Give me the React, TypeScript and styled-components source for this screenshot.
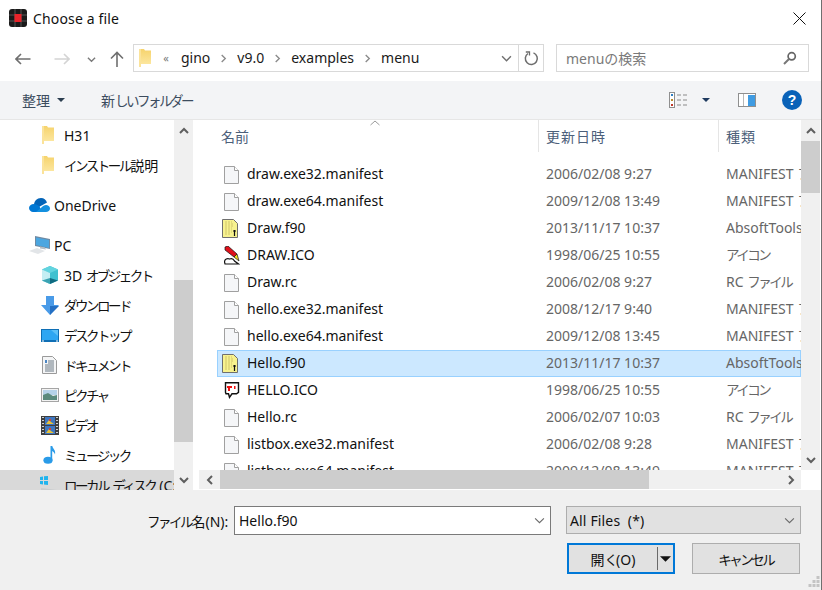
import React from 'react';
import styled, { createGlobalStyle } from 'styled-components';

const UI_FONT = '"Noto Sans", "Noto Sans CJK JP", sans-serif';

const GlobalStyle = createGlobalStyle`
    html, body {
        margin: 0;
        padding: 0;
        background: #ffffff;
    }
    * {
        box-sizing: border-box;
    }
`;

const Dialog = styled.div`
    width: 822px;
    height: 590px;
    display: flex;
    flex-direction: column;
    overflow: hidden;
    background: #ffffff;
    border-right: 1px solid #6f6f6f;
    font-family: ${UI_FONT};
    font-size: 14px;
    color: #1a1a1a;
`;

// the reference font sets kana much narrower than kanji
const Kana = styled.span`
    font-size: 13.5px;
    letter-spacing: -2.5px;
    margin-right: 0.5px;
`;

const TitleBar = styled.div`
    height: 36px;
    flex: none;
    display: flex;
    align-items: center;
    padding: 0 15px 0 9px;
    gap: 6px;
`;

const Title = styled.div`
    flex: 1;
    font-size: 14px;
    letter-spacing: 0.15px;
    color: #111111;
`;

const NavRow = styled.div`
    height: 45px;
    flex: none;
    display: flex;
    align-items: flex-start;
    padding: 8px 12px 0 0;
`;

const NavButton = styled.div<{ $w: number }>`
    width: ${(p) => p.$w}px;
    height: 28px;
    padding-top: 2px;
    flex: none;
    display: flex;
    align-items: center;
    justify-content: center;
`;

const AddressBox = styled.div`
    width: 411px;
    height: 28px;
    margin-left: 4px;
    flex: none;
    display: flex;
    align-items: center;
    border: 1px solid #d9d9d9;
    padding-left: 5px;
`;

const Crumbs = styled.div`
    flex: 1;
    display: flex;
    align-items: center;
    font-size: 14px;
    padding-bottom: 2px;
    color: #1a1a1a;
`;

const CrumbSep = styled.span`
    display: flex;
    width: 27px;
    justify-content: center;
    padding-top: 2px;
`;

const CrumbMore = styled.span`
    display: flex;
    width: 30px;
    justify-content: center;
    color: #7a7a7a;
    font-size: 11px;
`;

const AddressChevron = styled.div`
    display: flex;
    margin-right: 6px;
`;

const AddressTail = styled.div`
    width: 25px;
    height: 26px;
    flex: none;
    display: flex;
    align-items: center;
    justify-content: center;
    border-left: 1px solid #d9d9d9;
`;

const SearchBox = styled.div`
    width: 253px;
    height: 28px;
    margin-left: 12px;
    flex: none;
    display: flex;
    align-items: center;
    justify-content: space-between;
    padding: 0 11px 0 9px;
    border: 1px solid #d9d9d9;
    color: #7a7a7a;
    font-size: 14px;
`;

const Toolbar = styled.div`
    height: 39px;
    flex: none;
    display: flex;
    align-items: center;
    background: #f3f4f6;
    border-bottom: 1px solid #e6e6e6;
    padding: 0 19px 0 22px;
    font-size: 14px;
    color: #3c4c5e;
`;

const ToolItem = styled.div<{ $ml?: number }>`
    display: flex;
    align-items: center;
    gap: 7px;
    margin-left: ${(p) => p.$ml ?? 0}px;
`;

const Spacer = styled.div`
    flex: 1;
`;

const Main = styled.div`
    height: 370px;
    flex: none;
    display: flex;
`;

const Sidebar = styled.div`
    width: 174px;
    flex: none;
    overflow: hidden;
    white-space: nowrap;
`;

const NavGroup = styled.div`
    margin-top: 10px;
`;

const NavEntry = styled.div<{ $indent: number; $gap: number; $selected?: boolean }>`
    height: 30px;
    display: flex;
    align-items: center;
    padding-left: ${(p) => p.$indent}px;
    gap: ${(p) => p.$gap}px;
    background: ${(p) => (p.$selected ? '#d9d9d9' : 'transparent')};
    font-size: 14px;
    color: #111111;
`;

const ScrollY = styled.div<{ $h: number }>`
    width: 19px;
    height: ${(p) => p.$h}px;
    flex: none;
    display: flex;
    flex-direction: column;
    background: #f0f0f0;
`;

const ScrollEnd = styled.div`
    height: 21px;
    flex: none;
    display: flex;
    align-items: center;
    justify-content: center;
`;

const ThumbOffset = styled.div<{ $h: number }>`
    height: ${(p) => p.$h}px;
    flex: none;
`;

const ScrollThumb = styled.div<{ $h: number }>`
    height: ${(p) => p.$h}px;
    flex: none;
    background: #cdcdcd;
`;

const Gutter = styled.div`
    width: 6px;
    flex: none;
`;

const ListPane = styled.div`
    width: 621px;
    flex: none;
    display: flex;
    flex-direction: column;
`;

const ListTop = styled.div`
    height: 350px;
    flex: none;
    display: flex;
`;

const ListBody = styled.div`
    width: 602px;
    flex: none;
    overflow: hidden;
`;

const HeaderRow = styled.div`
    position: relative;
    height: 32px;
    display: grid;
    grid-template-columns: 339px 180px 83px;
    margin-bottom: 9px;
    color: #4c607a;
    font-size: 14px;
`;

const HeaderCell = styled.div<{ $first?: boolean }>`
    display: flex;
    align-items: center;
    padding-left: ${(p) => (p.$first ? 22 : 7)}px;
    letter-spacing: ${(p) => (p.$first ? 0 : 1)}px;
    border-left: ${(p) => (p.$first ? 'none' : '1px solid #e5e5e5')};
`;

const SortArrow = styled.div`
    position: absolute;
    left: 171px;
    top: 0;
    line-height: 0;
`;

const FileRow = styled.div<{ $selected?: boolean }>`
    height: 27px;
    margin-left: 18px;
    display: grid;
    grid-template-columns: 321px 180px 83px;
    align-items: center;
    white-space: nowrap;
    overflow: hidden;
    line-height: 19px;
    background: ${(p) => (p.$selected ? '#cce8ff' : 'transparent')};
    box-shadow: ${(p) => (p.$selected ? 'inset 0 0 0 1px #99d1ff' : 'none')};
`;

const NameCell = styled.div`
    display: flex;
    align-items: center;
    padding-left: 5px;
    gap: 6px;
    color: #111111;
`;

const FileName = styled.span`
    margin-bottom: 2px;
`;

const IconSlot = styled.div`
    width: 19px;
    height: 19px;
    flex: none;
    display: flex;
    align-items: center;
    justify-content: center;
`;

const MutedCell = styled.div`
    height: 19px;
    margin-bottom: 2px;
    padding-left: 8px;
    color: #666666;
    overflow: hidden;
`;

const ScrollX = styled.div`
    height: 20px;
    flex: none;
    display: flex;
`;

const XTrack = styled.div`
    width: 602px;
    flex: none;
    display: flex;
    background: #f0f0f0;
    height: 19px;
`;

const XEnd = styled.div`
    width: 21px;
    flex: none;
    display: flex;
    align-items: center;
    justify-content: center;
`;

const XThumb = styled.div`
    width: 429px;
    flex: none;
    background: #cdcdcd;
`;

const Footer = styled.div`
    position: relative;
    flex: 1;
    background: #f0f0f0;
    display: flex;
    flex-direction: column;
    padding: 16px 0 0 147px;
`;

const FieldRow = styled.div`
    display: flex;
    align-items: flex-start;
`;

const FieldLabel = styled.div`
    width: 87px;
    height: 29px;
    flex: none;
    display: flex;
    align-items: center;
    font-size: 14px;
    color: #111111;
    white-space: pre;
`;

const FileInput = styled.div`
    width: 317px;
    height: 29px;
    flex: none;
    display: flex;
    align-items: center;
    justify-content: space-between;
    padding: 0 5px 0 4px;
    background: #ffffff;
    border: 1px solid #7a7a7a;
    color: #111111;
`;

const FilterSelect = styled.div`
    width: 235px;
    height: 28px;
    margin-left: 15px;
    flex: none;
    display: flex;
    align-items: center;
    justify-content: space-between;
    padding: 0 5px 0 3px;
    background: #e1e1e1;
    border: 1px solid #adadad;
    color: #111111;
    letter-spacing: 0.15px;
`;

const ButtonRow = styled.div`
    display: flex;
    margin: 8px 0 0 420px;
`;

const PrimaryButton = styled.div`
    width: 108px;
    height: 31px;
    flex: none;
    display: flex;
    align-items: center;
    background: #e1e1e1;
    border: 2px solid #0078d7;
    font-size: 14px;
    color: #111111;
`;

const PrimaryLabel = styled.div`
    flex: 1;
    text-align: center;
    white-space: pre;
`;

const SplitArrow = styled.div`
    width: 16px;
    height: 23px;
    flex: none;
    display: flex;
    align-items: center;
    justify-content: center;
    border-left: 1.5px solid #6a6a6a;
`;

const CancelButton = styled.div`
    width: 108px;
    height: 31px;
    margin-left: 17px;
    flex: none;
    display: flex;
    align-items: center;
    justify-content: center;
    background: #e1e1e1;
    border: 1px solid #adadad;
    font-size: 14px;
    color: #111111;
`;

const Grip = styled.div`
    position: absolute;
    right: 1px;
    bottom: 2px;
    line-height: 0;
`;

const HelpBadge = styled.div`
    width: 20px;
    height: 20px;
    display: flex;
    align-items: center;
    justify-content: center;
    border-radius: 50%;
    background: #0a62b8;
    color: #ffffff;
    font-family: 'Liberation Sans', sans-serif;
    font-size: 14px;
    font-weight: 700;
`;

// wraps the kana runs of a label so they get the narrow setting
const jp = (text: string) =>
    text.split(/([\u3040-\u30ff]+)/).map((part, i) =>
        i % 2 === 1 ? <Kana key={i}>{part}</Kana> : part,
    );

const Chevron = ({ dir, size = 10, color = '#5f5f5f', w = 2 }: { dir: 'up' | 'down' | 'left' | 'right'; size?: number; color?: string; w?: number }) => {
    const paths = { up: 'M1 7l4-4 4 4', down: 'M1 3l4 4 4-4', left: 'M7 1L3 5l4 4', right: 'M3 1l4 4-4 4' };
    return (
        <svg width={size} height={size} viewBox="0 0 10 10" fill="none">
            <path d={paths[dir]} stroke={color} strokeWidth={w} />
        </svg>
    );
};

const BackArrow = () => (
    <svg width="16" height="12" viewBox="0 0 16 12" fill="none">
        <path d="M15.500 6H1M6 1L1 6l5 5" stroke="#6f6f6f" strokeWidth="1.600" />
    </svg>
);

const ForwardArrow = () => (
    <svg width="16" height="12" viewBox="0 0 16 12" fill="none">
        <path d="M.5 6H15M10 1l5 5-5 5" stroke="#d4d4d4" strokeWidth="1.600" />
    </svg>
);

const UpArrow = () => (
    <svg width="14" height="16" viewBox="0 0 14 16" fill="none">
        <path d="M7 16V1.500M1 7.500l6-6 6 6" stroke="#6f6f6f" strokeWidth="1.600" />
    </svg>
);

const AppLogo = () => (
    <svg width="18" height="18" viewBox="0 0 18 18">
        <rect width="18" height="18" rx="3" fill="#1a1a1a" />
        <path d="M0 6h18M0 12h18M6 0v18M12 0v18" stroke="#555555" strokeWidth="1" />
        <rect x="5.500" y="5" width="7" height="8" fill="#e8232a" />
    </svg>
);

const Folder = () => (
    <svg width="12" height="18" viewBox="0 0 12 18">
        <defs>
            <linearGradient id="folderFill" x1="0" y1="0" x2="0" y2="1">
                <stop offset="0" stopColor="#f6d36c" />
                <stop offset="1" stopColor="#fdeaa8" />
            </linearGradient>
        </defs>
        <path d="M0 0h5l1 1.500h6V15H2l-2 3z" fill="url(#folderFill)" />
        <path d="M0 0h2v18H0z" fill="#fbe39a" />
    </svg>
);

const OneDriveIcon = () => (
    <svg width="21" height="14" viewBox="0 0 21 14">
        <path d="M5 7C5 3 8 0 12 0c3 0 5 2 6 4.500L10 9z" fill="#0364b8" />
        <path d="M4 14C2 14 0 12 0 10s2-4 5-4c2 0 4 1 5.500 2.500L13 14z" fill="#0078d4" />
        <path d="M7 14l6-5c1-1 2-2 4-2s4 1.500 4 3.500S19 14 17 14z" fill="#1490df" />
    </svg>
);

const PcIcon = () => (
    <svg width="21" height="18" viewBox="0 0 21 18">
        <path d="M6 0l15 3v10L6 10z" fill="#6f8aa3" />
        <path d="M7 1.500l13 2.500v8L7 9z" fill="#4ba6e0" />
        <path d="M11 10.500l5 1 1 2-6-1z" fill="#b4bec6" />
        <path d="M0 15l8-3 8 3-7 3z" fill="#e2e5e8" />
    </svg>
);

const CubeIcon = () => (
    <svg width="18" height="18" viewBox="0 0 18 18">
        <path d="M9 0l8 3.500v11L9 18l-8-3.500v-11z" fill="#3fc1d0" />
        <path d="M9 0l8 3.500L9 7 1 3.500z" fill="#62d4df" />
        <path d="M1 3.500L9 7v11l-8-3.500z" fill="#c4eef3" />
        <path d="M9 12l8 2.500L9 18z" fill="#0f6a80" />
        <path d="M9 12l-8 2.500L9 18z" fill="#3aa3b3" />
    </svg>
);

const DownloadIcon = () => (
    <svg width="18" height="19" viewBox="0 0 18 19">
        <path d="M5 0h8v9h5l-9 10L0 9h5z" fill="#4a9be8" />
        <path d="M9 10h9l-9 9z" fill="#2470c4" />
    </svg>
);

const DesktopIcon = () => (
    <svg width="18" height="13" viewBox="0 0 18 13">
        <rect width="18" height="13" fill="#0f6fb5" />
        <rect x="1" y="1" width="16" height="10" fill="#2ea6f2" />
        <path d="M10 1h7v6z" fill="#5cc0f7" />
        <path d="M1 12h2M15 12h2" stroke="#ffffff" strokeWidth="1" />
    </svg>
);

const DocumentIcon = () => (
    <svg width="15" height="18" viewBox="0 0 15 18">
        <path d="M.5.500h10l4 4v13H.5z" fill="#f4f5f6" stroke="#9a9a9a" />
        <path d="M3 4h2v3H3z" fill="#4b86c4" />
        <path d="M6 5h6M6 7h6M3 9h9M3 11h9M3 13h9M3 15h9" stroke="#6c7a86" strokeWidth="1" />
    </svg>
);

const PictureIcon = () => (
    <svg width="18" height="14" viewBox="0 0 18 14">
        <rect x=".5" y=".5" width="17" height="13" fill="#f3f3f3" stroke="#a5a5a5" />
        <rect x="2" y="2" width="14" height="5" fill="#b5d2e8" />
        <path d="M2 7l5-2 5 3 4-1v5H2z" fill="#5b8a7c" />
    </svg>
);

const VideoIcon = () => (
    <svg width="18" height="19" viewBox="0 0 18 19">
        <rect width="18" height="19" fill="#3f3f3f" />
        <path d="M1 1.500h2M1 4.500h2M1 7.500h2M1 10.500h2M1 13.500h2M1 16.500h2M15 1.500h2M15 4.500h2M15 7.500h2M15 10.500h2M15 13.500h2M15 16.500h2" stroke="#d0d0d0" strokeWidth="1" />
        <rect x="4" y="1" width="10" height="8" fill="#3f76c0" />
        <rect x="4" y="10" width="10" height="8" fill="#3f76c0" />
        <path d="M5 8l3-4 2 2 3 2zM5 17l3-4 2 2 3 2z" fill="#e8c23a" />
        <path d="M8 3h2v2H8zM8 12h2v2H8z" fill="#d8452f" />
    </svg>
);

const MusicIcon = () => (
    <svg width="13" height="18" viewBox="0 0 13 18">
        <ellipse cx="5" cy="14.300" rx="4.600" ry="3.500" fill="#2a9be8" />
        <path d="M7.500 14V0h1.800c.5 3 3.700 4 2.700 8.500-.5-2-2-3-2.800-3.500v9z" fill="#2a9be8" />
    </svg>
);

const DiskIcon = () => (
    <svg width="19" height="19" viewBox="0 0 19 19">
        <path d="M1 1l3-.5V4H1zM5 .3L9 0v4H5zM1 5h3v3.500L1 8zM5 5h4v4l-4-.5z" fill="#1fb4ee" />
        <path d="M2 12l16 2v5H2z" fill="#c9ccce" />
    </svg>
);

const BlankFile = () => (
    <svg width="15" height="18" viewBox="0 0 15 18">
        <path d="M.5.500h10l4 4v13H.5z" fill="#f5f6f8" stroke="#a0a0a0" />
        <path d="M10.500.500v4h4" fill="#ffffff" stroke="#a0a0a0" />
    </svg>
);

const FortranFile = () => (
    <svg width="19" height="19" viewBox="0 0 19 19">
        <path d="M.5.500h11l4 4v14H.5z" fill="#f7f28e" stroke="#6f6f6f" />
        <path d="M3 3h7M3 5h8M3 7h9M3 9h7M3 11h7M3 13h7M3 15h6" stroke="#cfc36a" strokeWidth="1.200" strokeDasharray="2 1" />
        <path d="M12.500 11v6M11 12h3" stroke="#111111" strokeWidth="1.200" />
    </svg>
);

const DrawIco = () => (
    <svg width="16" height="19" viewBox="0 0 16 19">
        <path d="M1 1l3-1 9 8-3 3-9-7z" fill="#e0101a" stroke="#111111" strokeWidth=".7" />
        <path d="M10 11l3-3 2 7z" fill="#f4e020" stroke="#111111" strokeWidth=".7" />
        <path d="M.5 16c0-3 3-4 5-3 2-1 4 0 5 2l4 3H1z" fill="#ffffff" stroke="#111111" strokeWidth="1.200" />
    </svg>
);

const HelloIco = () => (
    <svg width="16" height="17" viewBox="0 0 16 17">
        <path d="M1.500.800h13v9.500l-2 1.500H8l-2.500 3.500-1-3.500H2l-.500-1.500z" fill="#ffffff" stroke="#111111" strokeWidth="1.400" />
        <path d="M3 4h5v2H6v3H4V6H3zM10 4h1.500v3H10z" fill="#ee1111" />
    </svg>
);

const RefreshIcon = () => (
    <svg width="15" height="15" viewBox="0 0 15 15" fill="none">
        <path d="M4 2.500a6 6 0 1 0 5.500-.6" stroke="#6d6d6d" strokeWidth="1.500" />
        <path d="M1.800 1H5.500v3.600" stroke="#6d6d6d" strokeWidth="1.300" />
    </svg>
);

const SearchIcon = () => (
    <svg width="14" height="14" viewBox="0 0 14 14" fill="none">
        <circle cx="8.700" cy="5.300" r="3.600" stroke="#666666" strokeWidth="1.700" />
        <path d="M6 8L1 13" stroke="#777777" strokeWidth="2" />
    </svg>
);

const CloseIcon = () => (
    <svg width="13" height="13" viewBox="0 0 13 13" fill="none">
        <path d="M.5.500l12 12M12.500.500l-12 12" stroke="#111111" strokeWidth="1" />
    </svg>
);

const ViewIcon = () => (
    <svg width="19" height="16" viewBox="0 0 19 16" fill="none">
        <rect x=".5" y=".5" width="5" height="15" fill="#ffffff" stroke="#8f8f8f" />
        <path d="M2 2h2v2H2z" fill="#2f7fc2" />
        <path d="M2 7h2v2H2z" fill="#b98b2c" />
        <path d="M2 12h2v2H2z" fill="#c0382b" />
        <path d="M8 3h4M14 3h4M8 8h4M14 8h4M8 13h4M14 13h4" stroke="#8a8a8a" strokeWidth="1" />
    </svg>
);

const PaneIcon = () => (
    <svg width="18" height="14" viewBox="0 0 18 14">
        <rect x=".5" y=".5" width="17" height="13" fill="#ffffff" stroke="#8f8f8f" />
        <rect x="10" y="2" width="7" height="11" fill="#3f9be2" />
        <path d="M5.500 1v12" stroke="#b8b8b8" strokeWidth="1" />
    </svg>
);

const SortGlyph = () => (
    <svg width="10" height="6" viewBox="0 0 10 6" fill="none">
        <path d="M.5 5L5 1l4.500 4" stroke="#9a9a9a" />
    </svg>
);

const Caret = ({ color = '#2c3e50', w = 8, h = 4 }: { color?: string; w?: number; h?: number }) => (
    <svg width={w} height={h} viewBox="0 0 8 4">
        <path d="M0 0h8L4 4z" fill={color} />
    </svg>
);

const GripDots = () => (
    <svg width="12" height="12" viewBox="0 0 12 12">
        <path d="M8.500 0h3v3h-3zM4.500 4h3v3h-3zM8.500 4h3v3h-3zM.5 8h3v3h-3zM4.500 8h3v3h-3zM8.500 8h3v3h-3z" fill="#c4c4c4" />
    </svg>
);

const files = [
    { name: 'draw.exe32.manifest', date: '2006/02/08 9:27', type: 'MANIFEST ファイル', icon: <BlankFile /> },
    { name: 'draw.exe64.manifest', date: '2009/12/08 13:49', type: 'MANIFEST ファイル', icon: <BlankFile /> },
    { name: 'Draw.f90', date: '2013/11/17 10:37', type: 'AbsoftTools', icon: <FortranFile /> },
    { name: 'DRAW.ICO', date: '1998/06/25 10:55', type: 'アイコン', icon: <DrawIco /> },
    { name: 'Draw.rc', date: '2006/02/08 9:27', type: 'RC ファイル', icon: <BlankFile /> },
    { name: 'hello.exe32.manifest', date: '2008/12/17 9:40', type: 'MANIFEST ファイル', icon: <BlankFile /> },
    { name: 'hello.exe64.manifest', date: '2009/12/08 13:45', type: 'MANIFEST ファイル', icon: <BlankFile /> },
    { name: 'Hello.f90', date: '2013/11/17 10:37', type: 'AbsoftTools', icon: <FortranFile />, selected: true },
    { name: 'HELLO.ICO', date: '1998/06/25 10:55', type: 'アイコン', icon: <HelloIco /> },
    { name: 'Hello.rc', date: '2006/02/07 10:03', type: 'RC ファイル', icon: <BlankFile /> },
    { name: 'listbox.exe32.manifest', date: '2006/02/08 9:28', type: 'MANIFEST ファイル', icon: <BlankFile /> },
    { name: 'listbox.exe64.manifest', date: '2009/12/08 13:49', type: 'MANIFEST ファイル', icon: <BlankFile /> },
];

const libraries = [
    { label: '3D オブジェクト', icon: <CubeIcon /> },
    { label: 'ダウンロード', icon: <DownloadIcon /> },
    { label: 'デスクトップ', icon: <DesktopIcon /> },
    { label: 'ドキュメント', icon: <DocumentIcon /> },
    { label: 'ピクチャ', icon: <PictureIcon /> },
    { label: 'ビデオ', icon: <VideoIcon /> },
    { label: 'ミュージック', icon: <MusicIcon /> },
];

const crumbs = ['gino', 'v9.0', 'examples', 'menu'];

export default function App() {
    return (
        <Dialog>
            <GlobalStyle />
            <TitleBar>
                <AppLogo />
                <Title>Choose a file</Title>
                <CloseIcon />
            </TitleBar>
            <NavRow>
                <NavButton $w={45}><BackArrow /></NavButton>
                <NavButton $w={33}><ForwardArrow /></NavButton>
                <NavButton $w={26}><Chevron dir="down" size={9} color="#7a7a7a" w={1.500} /></NavButton>
                <NavButton $w={25}><UpArrow /></NavButton>
                <AddressBox>
                    <Folder />
                    <Crumbs>
                        <CrumbMore>«</CrumbMore>
                        {crumbs.map((c, i) => (
                            <React.Fragment key={c}>
                                {i > 0 && <CrumbSep><Chevron dir="right" size={9} color="#8a8a8a" w={1.500} /></CrumbSep>}
                                <span>{c}</span>
                            </React.Fragment>
                        ))}
                    </Crumbs>
                    <AddressChevron><Chevron dir="down" size={11} color="#6f6f6f" w={1.300} /></AddressChevron>
                    <AddressTail><RefreshIcon /></AddressTail>
                </AddressBox>
                <SearchBox>
                    <span>menuの検索</span>
                    <SearchIcon />
                </SearchBox>
            </NavRow>
            <Toolbar>
                <ToolItem>整理 <Caret /></ToolItem>
                <ToolItem $ml={36}><span>{jp('新しいフォルダー')}</span></ToolItem>
                <Spacer />
                <ViewIcon />
                <ToolItem $ml={14}><Caret color="#1f3a5f" /></ToolItem>
                <ToolItem $ml={28}><PaneIcon /></ToolItem>
                <ToolItem $ml={26}><HelpBadge>?</HelpBadge></ToolItem>
            </Toolbar>
            <Main>
                <Sidebar>
                    <NavEntry $indent={42} $gap={10}><Folder /><span>H31</span></NavEntry>
                    <NavEntry $indent={42} $gap={10}><Folder /><span>{jp('インストール説明')}</span></NavEntry>
                    <NavGroup>
                        <NavEntry $indent={29} $gap={4}><OneDriveIcon /><span>OneDrive</span></NavEntry>
                    </NavGroup>
                    <NavGroup>
                        <NavEntry $indent={29} $gap={4}><PcIcon /><span>PC</span></NavEntry>
                        {libraries.map((l) => (
                            <NavEntry key={l.label} $indent={40} $gap={5}>
                                <IconSlot>{l.icon}</IconSlot>
                                <span>{jp(l.label)}</span>
                            </NavEntry>
                        ))}
                        <NavEntry $indent={39} $gap={6} $selected>
                            <IconSlot><DiskIcon /></IconSlot>
                            <span>{jp('ローカル ディスク (C:)')}</span>
                        </NavEntry>
                    </NavGroup>
                </Sidebar>
                <ScrollY $h={370}>
                    <ScrollEnd><Chevron dir="up" /></ScrollEnd>
                    <ThumbOffset $h={139} />
                    <ScrollThumb $h={162} />
                    <Spacer />
                    <ScrollEnd><Chevron dir="down" /></ScrollEnd>
                </ScrollY>
                <Gutter />
                <ListPane>
                    <ListTop>
                        <ListBody>
                            <HeaderRow>
                                <SortArrow><SortGlyph /></SortArrow>
                                <HeaderCell $first>名前</HeaderCell>
                                <HeaderCell>更新日時</HeaderCell>
                                <HeaderCell>種類</HeaderCell>
                            </HeaderRow>
                            {files.map((f) => (
                                <FileRow key={f.name} $selected={f.selected}>
                                    <NameCell>
                                        <IconSlot>{f.icon}</IconSlot>
                                        <FileName>{f.name}</FileName>
                                    </NameCell>
                                    <MutedCell>{f.date}</MutedCell>
                                    <MutedCell>{jp(f.type)}</MutedCell>
                                </FileRow>
                            ))}
                        </ListBody>
                        <ScrollY $h={350}>
                            <ScrollEnd><Chevron dir="up" /></ScrollEnd>
                            <ScrollThumb $h={52} />
                            <Spacer />
                            <ScrollEnd><Chevron dir="down" /></ScrollEnd>
                        </ScrollY>
                    </ListTop>
                    <ScrollX>
                        <XTrack>
                            <XEnd><Chevron dir="left" /></XEnd>
                            <XThumb />
                            <Spacer />
                            <XEnd><Chevron dir="right" /></XEnd>
                        </XTrack>
                    </ScrollX>
                </ListPane>
            </Main>
            <Footer>
                <FieldRow>
                    <FieldLabel>{jp('ファイル名(N):')}</FieldLabel>
                    <FileInput>
                        Hello.f90
                        <Chevron dir="down" size={11} color="#6a6a6a" w={1} />
                    </FileInput>
                    <FilterSelect>
                        All Files&nbsp;&nbsp;(*)
                        <Chevron dir="down" size={11} color="#6a6a6a" w={1} />
                    </FilterSelect>
                </FieldRow>
                <ButtonRow>
                    <PrimaryButton>
                        <PrimaryLabel>{jp('開く(O)')}</PrimaryLabel>
                        <SplitArrow><Caret color="#111111" w={11} h={6} /></SplitArrow>
                    </PrimaryButton>
                    <CancelButton><span>{jp('キャンセル')}</span></CancelButton>
                </ButtonRow>
                <Grip><GripDots /></Grip>
            </Footer>
        </Dialog>
    );
}
